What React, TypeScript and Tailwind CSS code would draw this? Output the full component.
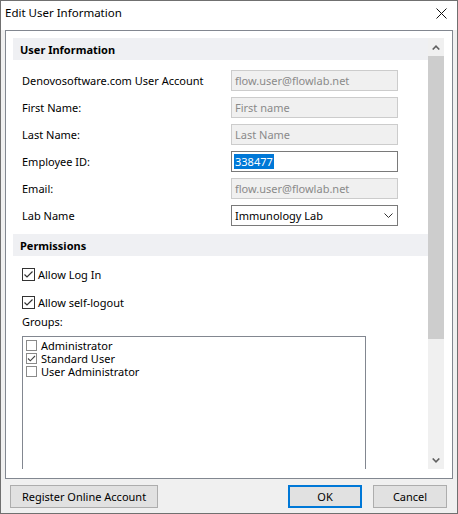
import React from "react";

const Check = () => (
  <svg width="11" height="11" viewBox="0 0 11 11" className="block">
    <polyline points="1.5,5.5 4,8 9.5,2.5" fill="none" stroke="#333" strokeWidth="1.2" />
  </svg>
);

const CheckRow = ({ label, mt }: { label: string; mt: string }) => (
  <div className={`flex items-center h-[13px] pl-[9px] ${mt}`}>
    <div className="w-[13px] h-[13px] border border-[#333333] bg-white flex items-center justify-center">
      <Check />
    </div>
    <span className="ml-[3px] leading-none">{label}</span>
  </div>
);

const ListItem = ({ label, checked }: { label: string; checked?: boolean }) => (
  <div className="flex items-center h-[13px]">
    <div className="w-[11px] h-[11px] border border-[#8a8a8a] bg-white flex items-center justify-center">
      {checked ? (
        <svg width="9" height="9" viewBox="0 0 9 9" className="block">
          <polyline points="1,4.5 3.3,6.8 8,2" fill="none" stroke="#444" strokeWidth="1.1" />
        </svg>
      ) : null}
    </div>
    <span className="ml-[4px] leading-[11px]">{label}</span>
  </div>
);

const Row = ({ label, children }: { label: string; children: React.ReactNode }) => (
  <div className="flex items-center h-[21px]">
    <div className="pl-[9px] w-[218px] leading-none pb-[1px]">{label}</div>
    {children}
  </div>
);

const Disabled = ({ text }: { text: string }) => (
  <div className="w-[167px] h-[21px] border border-[#cccccc] bg-[#f0f0f0] flex items-center pl-[3px] text-[#8a8a8a] leading-none">
    {text}
  </div>
);

export default function App() {
  return (
    <div className="w-[458px] h-[514px] border border-[#707070] bg-[#f0f0f0] flex flex-col font-['Noto_Sans',sans-serif] text-[11px] text-black">
      {/* Title bar */}
      <div className="h-[29px] bg-white flex items-center justify-between pl-[4px] pr-[10px] pb-[5px]">
        <span className="leading-none text-[11.5px]">Edit User Information</span>
        <svg width="11" height="11" viewBox="0 0 11 11" className="block">
          <line x1="0.5" y1="0.5" x2="10.5" y2="10.5" stroke="#111" strokeWidth="1" />
          <line x1="10.5" y1="0.5" x2="0.5" y2="10.5" stroke="#111" strokeWidth="1" />
        </svg>
      </div>

      {/* Body */}
      <div className="px-[4px]">
        <div className="h-[449px] border border-[#828790] bg-white flex pt-[7px] pl-[7px] pr-[8px] pb-[9px]">
          <div className="w-[415px] h-[431px] overflow-hidden">
            <div className="h-[22px] bg-[#eff0f3] flex items-center pl-[7px] font-bold leading-none">
              User Information
            </div>
            <div className="pt-[10px] flex flex-col gap-[6px]">
              <Row label="Denovosoftware.com User Account">
                <Disabled text="flow.user@flowlab.net" />
              </Row>
              <Row label="First Name:">
                <Disabled text="First name" />
              </Row>
              <Row label="Last Name:">
                <Disabled text="Last Name" />
              </Row>
              <Row label="Employee ID:">
                <div className="w-[167px] h-[21px] border border-[#7a7a7a] bg-white flex items-center pl-[2px] leading-none">
                  <span className="bg-[#0078d7] text-white px-[1px] py-[2px]">338477</span>
                </div>
              </Row>
              <Row label="Email:">
                <Disabled text="flow.user@flowlab.net" />
              </Row>
              <Row label="Lab Name">
                <div className="w-[167px] h-[21px] border border-[#7a7a7a] bg-white flex items-center justify-between pl-[3px] pr-[4px] leading-none">
                  <span>Immunology Lab</span>
                  <svg width="9" height="5" viewBox="0 0 9 5" className="block">
                    <polyline points="0.5,0.5 4.5,4.5 8.5,0.5" fill="none" stroke="#333" strokeWidth="1" />
                  </svg>
                </div>
              </Row>
            </div>
            <div className="mt-[8px] h-[22px] bg-[#eff0f3] flex items-center pl-[7px] font-bold leading-none">
              Permissions
            </div>
            <CheckRow label="Allow Log In" mt="mt-[12px]" />
            <CheckRow label="Allow self-logout" mt="mt-[15px]" />
            <div className="mt-[4px] h-[16px] flex items-center pl-[9px] leading-none">Groups:</div>
            <div className="mt-[7px] ml-[9px] w-[344px] h-[200px] border border-[#828790] pt-[2px] pl-[3px]">
              <ListItem label="Administrator" />
              <ListItem label="Standard User" checked />
              <ListItem label="User Administrator" />
            </div>
          </div>
          {/* Scrollbar */}
          <div className="w-[16px] h-[431px] bg-[#f0f0f0] flex flex-col">
            <div className="h-[18px] flex items-center justify-center">
              <svg width="8" height="5" viewBox="0 0 8 5" className="block">
                <polyline points="0.7,4.5 4,1.2 7.3,4.5" fill="none" stroke="#606060" strokeWidth="1.6" />
              </svg>
            </div>
            <div className="h-[283px] bg-[#cdcdcd]" />
            <div className="flex-1" />
            <div className="h-[17px] flex items-center justify-center">
              <svg width="8" height="5" viewBox="0 0 8 5" className="block">
                <polyline points="0.7,0.5 4,3.8 7.3,0.5" fill="none" stroke="#606060" strokeWidth="1.6" />
              </svg>
            </div>
          </div>
        </div>
      </div>

      {/* Bottom buttons */}
      <div className="h-[34px] flex items-start pt-[6px] pl-[9px] pr-[10px]">
        <button className="w-[148px] h-[23px] bg-[#e1e1e1] border border-[#adadad] flex items-center justify-center leading-none">
          Register Online Account
        </button>
        <button className="ml-auto w-[74px] h-[23px] bg-[#e1e1e1] border-2 border-[#0078d7] flex items-center justify-center leading-none">
          OK
        </button>
        <button className="ml-[11px] w-[74px] h-[23px] bg-[#e1e1e1] border border-[#adadad] flex items-center justify-center leading-none">
          Cancel
        </button>
      </div>
    </div>
  );
}
